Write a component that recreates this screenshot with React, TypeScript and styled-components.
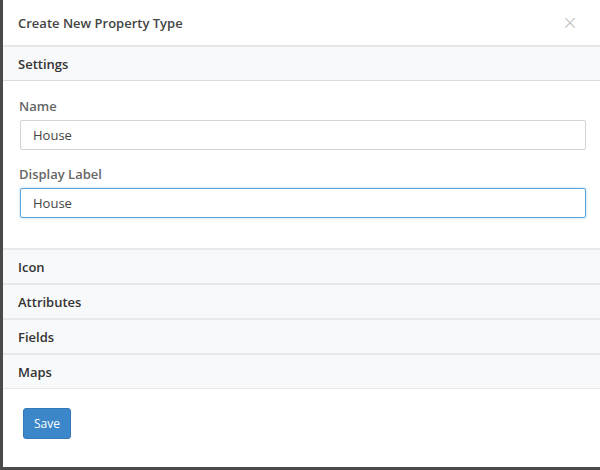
import styled, { createGlobalStyle } from 'styled-components';

const GlobalStyle = createGlobalStyle`
  html, body {
    margin: 0;
    padding: 0;
    background: #4a4a4a;
  }
  body {
    font-family: "Open Sans", "Liberation Sans", sans-serif;
  }
`;

const sections = ['Icon', 'Attributes', 'Fields', 'Maps'];

export default function App() {
  return (
    <>
      <GlobalStyle />
      <St.Backdrop>
        <St.Modal>
          <St.Header>
            <St.Title>Create New Property Type</St.Title>
            <St.Close>×</St.Close>
          </St.Header>

          <St.Panel>
            <St.PanelHeading $open>Settings</St.PanelHeading>
            <St.PanelBody>
              <St.FormGroup>
                <St.Label>Name</St.Label>
                <St.Input defaultValue="House" />
              </St.FormGroup>
              <St.FormGroup>
                <St.Label>Display Label</St.Label>
                <St.Input defaultValue="House" $focused />
              </St.FormGroup>
            </St.PanelBody>
          </St.Panel>

          {sections.map((name) => (
            <St.Panel key={name}>
              <St.PanelHeading>{name}</St.PanelHeading>
            </St.Panel>
          ))}

          <St.Footer>
            <St.SaveButton>Save</St.SaveButton>
          </St.Footer>
        </St.Modal>
      </St.Backdrop>
    </>
  );
}

const St = {
  Backdrop: styled.div`
    width: 600px;
    height: 470px;
    padding: 0 0 3px 3px;
    box-sizing: border-box;
    background: #4a4a4a;
  `,
  Modal: styled.div`
    height: 467px;
    background: #fff;
    display: flex;
    flex-direction: column;
  `,
  Header: styled.div`
    height: 46px;
    box-sizing: border-box;
    display: flex;
    align-items: center;
    justify-content: space-between;
    padding: 0 22px 0 15px;
    border-bottom: 1px solid #e5e5e5;
  `,
  Title: styled.h4`
    margin: 0;
    font-size: 13px;
    font-weight: 600;
    color: #444;
  `,
  Close: styled.span`
    font-size: 19px;
    line-height: 1;
    color: #bbb;
    font-family: "DejaVu Sans", sans-serif;
    font-weight: 300;
  `,
  Panel: styled.div`
    border-bottom: 1px solid #e6e8ea;
  `,
  PanelHeading: styled.div<{ $open?: boolean }>`
    height: ${({ $open }) => ($open ? '35px' : '34px')};
    box-sizing: border-box;
    display: flex;
    align-items: center;
    padding: 0 15px;
    background: #f8f9fa;
    border-top: 1px solid #e6e8ea;
    border-bottom: ${({ $open }) => ($open ? '1px solid #dcdcdc' : 'none')};
    font-size: 13px;
    font-weight: 600;
    color: #333;
  `,
  PanelBody: styled.div`
    padding: 16px 14px 30px 16px;
    display: flex;
    flex-direction: column;
    gap: 15px;
  `,
  FormGroup: styled.div`
    display: flex;
    flex-direction: column;
    gap: 5px;
  `,
  Label: styled.label`
    font-size: 13px;
    font-weight: 600;
    color: #666;
  `,
  Input: styled.input<{ $focused?: boolean }>`
    height: 30px;
    box-sizing: border-box;
    margin-left: 1px;
    padding: 0 12px;
    border: 1px solid ${({ $focused }) => ($focused ? '#5ea4d8' : '#d4d4d4')};
    border-radius: 2px;
    box-shadow: ${({ $focused }) => ($focused ? '0 0 3px rgba(102, 175, 233, 0.5)' : 'none')};
    font-family: "Open Sans", "Liberation Sans", sans-serif;
    font-size: 13px;
    color: #444;
    outline: none;
  `,
  Footer: styled.div`
    padding: 19px 20px;
  `,
  SaveButton: styled.button`
    width: 48px;
    height: 31px;
    background: #3b87c9;
    border: 1px solid #3579b8;
    border-radius: 3px;
    color: #fff;
    font-family: "Open Sans", "Liberation Sans", sans-serif;
    font-size: 12px;
    padding: 0;
  `,
};
